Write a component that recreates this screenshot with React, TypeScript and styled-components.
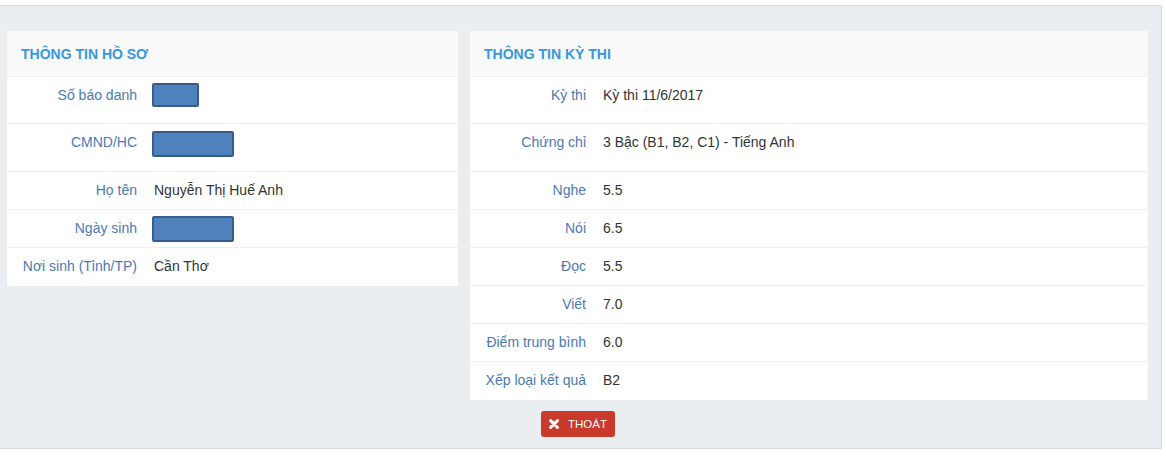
import styled, { createGlobalStyle } from 'styled-components';

const GlobalStyle = createGlobalStyle`
  html, body {
    margin: 0;
    padding: 0;
    background: #fff;
  }
  body {
    font-family: 'Liberation Sans', Arial, sans-serif;
    font-size: 14px;
    color: #333;
  }
`;

const Page = styled.div`
  padding-top: 5px;
  width: 1162px;
`;

const Wrapper = styled.div`
  background: #ebeef0;
  border: 1px solid #d9dcde;
  border-left: none;
  padding: 25px 12px 11px 7px;
`;

const Columns = styled.div`
  display: grid;
  grid-template-columns: 451px 678px;
  column-gap: 12px;
  align-items: start;
`;

const Panel = styled.section`
  background: #fff;
`;

const PanelHeader = styled.div`
  height: 46px;
  display: flex;
  align-items: center;
  padding-left: 14px;
  padding-top: 1px;
  box-sizing: border-box;
  background: #f9f9f9;
  border-bottom: 1px solid #eceef0;
  color: #3598dc;
  font-weight: bold;
  font-size: 14px;
  text-transform: uppercase;
`;

const Row = styled.div<{ $height?: number }>`
  display: flex;
  align-items: flex-start;
  box-sizing: border-box;
  height: ${p => p.$height ?? 38}px;
  border-bottom: 1px solid #eceef0;
  &:last-child {
    border-bottom: none;
  }
`;

const Label = styled.div<{ $width: number }>`
  width: ${p => p.$width}px;
  flex-shrink: 0;
  text-align: right;
  padding: 8px 0;
  line-height: 20px;
  color: #4a7ab5;
  font-size: 14px;
`;

const Value = styled.div`
  padding: 8px 0 8px 17px;
  line-height: 20px;
  color: #333;
  font-size: 14px;
`;

const Redacted = styled.span<{ $w: number; $h: number; $top: number }>`
  display: block;
  box-sizing: border-box;
  width: ${p => p.$w}px;
  height: ${p => p.$h}px;
  margin: ${p => p.$top}px 0 0 -2px;
  background: #4f81bd;
  border: 2px solid #385d8a;
  border-radius: 2px;
`;

const Actions = styled.div`
  display: flex;
  padding: 11px 0 0 534px;
`;

const ExitButton = styled.button`
  display: inline-flex;
  align-items: center;
  gap: 9px;
  height: 26px;
  padding: 0 8px 0 8px;
  background: #c9392c;
  color: #fff;
  border: none;
  border-radius: 3px;
  font-family: 'Liberation Sans', Arial, sans-serif;
  font-size: 11.5px;
  text-transform: uppercase;
  cursor: pointer;
`;

// bold "times" glyph like font-awesome's fa-times
const TimesIcon = () => (
  <svg width="10" height="10" viewBox="0 0 10 10" aria-hidden="true">
    <path d="M1.6 1.6 L8.4 8.4 M8.4 1.6 L1.6 8.4" stroke="#fff" strokeWidth="3" strokeLinecap="round" />
  </svg>
);

const profile: { label: string; value?: string; box?: [number, number, number]; height?: number }[] = [
  { label: 'Số báo danh', box: [47, 24, -2], height: 47 },
  { label: 'CMND/HC', box: [82, 26, -1], height: 48 },
  { label: 'Họ tên', value: 'Nguyễn Thị Huế Anh' },
  { label: 'Ngày sinh', box: [82, 26, -2] },
  { label: 'Nơi sinh (Tỉnh/TP)', value: 'Cần Thơ' },
];

const exam: { label: string; value: string; height?: number }[] = [
  { label: 'Kỳ thi', value: 'Kỳ thi 11/6/2017', height: 47 },
  { label: 'Chứng chỉ', value: '3 Bậc (B1, B2, C1) - Tiếng Anh', height: 48 },
  { label: 'Nghe', value: '5.5' },
  { label: 'Nói', value: '6.5' },
  { label: 'Đọc', value: '5.5' },
  { label: 'Viết', value: '7.0' },
  { label: 'Điểm trung bình', value: '6.0' },
  { label: 'Xếp loại kết quả', value: 'B2' },
];

export default function App() {
  return (
    <>
      <GlobalStyle />
      <Page>
        <Wrapper>
          <Columns>
            <Panel>
              <PanelHeader>Thông tin hồ sơ</PanelHeader>
              {profile.map(r => (
                <Row key={r.label} $height={r.height}>
                  <Label $width={130}>{r.label}</Label>
                  <Value>
                    {r.box ? <Redacted $w={r.box[0]} $h={r.box[1]} $top={r.box[2]} /> : r.value}
                  </Value>
                </Row>
              ))}
            </Panel>
            <Panel>
              <PanelHeader>Thông tin kỳ thi</PanelHeader>
              {exam.map(r => (
                <Row key={r.label} $height={r.height}>
                  <Label $width={116}>{r.label}</Label>
                  <Value>{r.value}</Value>
                </Row>
              ))}
            </Panel>
          </Columns>
          <Actions>
            <ExitButton>
              <TimesIcon />
              Thoát
            </ExitButton>
          </Actions>
        </Wrapper>
      </Page>
    </>
  );
}
